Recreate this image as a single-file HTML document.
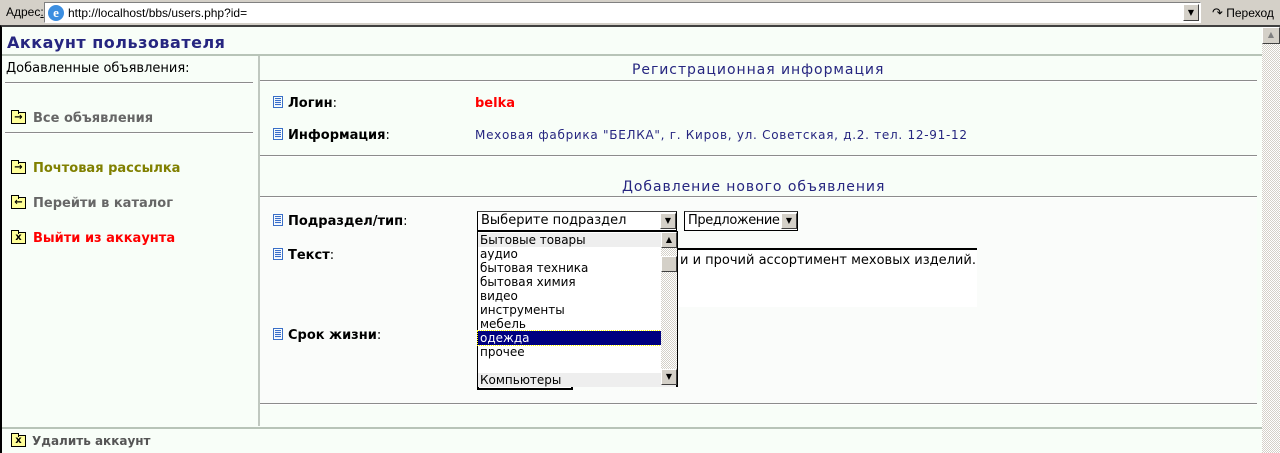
<!DOCTYPE html>
<html><head><meta charset="utf-8"><style>
*{margin:0;padding:0;box-sizing:border-box}
body{width:1280px;height:453px;overflow:hidden;background:#d4d0c8;position:relative;font-family:"DejaVu Sans","Liberation Sans",sans-serif;font-size:13px}
.a{position:absolute;white-space:nowrap}
.hr{position:absolute;height:2px;background:#8c8c8c;border-bottom:1px solid #fff}
.lh{position:absolute;height:1px;background:#b8c4b8}
.fold{position:absolute;width:15px;height:12px;background:#ffff99;border:1px solid #000;font:bold 10px/9px "DejaVu Sans",sans-serif;text-align:center;color:#000}
.fold:before{content:"";position:absolute;left:-1px;top:-3px;width:6px;height:3px;background:#ffff99;border:1px solid #000;border-bottom:none}
.doc{position:absolute;width:10px;height:12px;border:1px solid #3a6fc8;background:repeating-linear-gradient(#e8f0ff 0 1px,#3a6fc8 1px 2px);background-clip:content-box;padding:1px}
.b{font-weight:bold;color:#000}
.sel{position:absolute;background:#fff;border:1px solid #000;border-top-color:#404040;font-size:13px;padding-left:3px;line-height:18px}
.arr{position:absolute;width:16px;background:#d4d0c8;border:1px solid;border-color:#fff #404040 #404040 #fff;font-size:8px;text-align:center}
.w{letter-spacing:0.95px}
</style></head><body>
<div class="a" style="left:6px;top:5px;font:12px 'Liberation Sans',sans-serif;color:#000">Адрес<u>:</u></div>
<div class="a" style="left:44px;top:2px;width:1157px;height:21px;background:#fff;border:1px solid #808080;border-right-color:#fff;border-bottom-color:#fff"></div>
<div class="a" style="left:48px;top:5px;width:16px;height:16px;border-radius:50%;background:#3c8ee0;color:#fff;font:bold 13px/16px 'Liberation Serif';text-align:center">e</div>
<div class="a" style="left:68px;top:6px;font:12px 'Liberation Sans',sans-serif">http://localhost/bbs/users.php?id=</div>
<div class="arr" style="left:1183px;top:4px;height:17px;line-height:15px">▼</div>
<div class="a" style="left:1212px;top:5px;font:12px 'Liberation Sans',sans-serif"><span style="font-size:13px">↷</span> Переход</div>
<div class="a" style="left:0;top:25px;width:1280px;height:428px;background:#f8fef8;border-top:2px solid #404040;border-left:2px solid #000"></div>
<div class="a" style="left:1262px;top:27px;width:18px;height:426px;background:repeating-conic-gradient(#d4d0c8 0 25%,#fff 0 50%) 0 0/2px 2px"></div>
<div class="arr" style="left:1262px;top:27px;height:17px;line-height:14px;width:18px;color:#808080">▲</div>
<div class="a" style="left:7px;top:33px;font-size:16px;font-weight:bold;color:#262680;letter-spacing:0.5px">Аккаунт пользователя</div>
<div class="lh" style="left:2px;top:54px;width:1260px;height:2px"></div>
<div class="a" style="left:258px;top:56px;width:2px;height:370px;background:#c0c8c0"></div>
<div class="a" style="left:6px;top:61px;color:#000">Добавленные объявления:</div>
<div class="hr" style="left:5px;top:82px;width:248px"></div>
<div class="fold" style="left:11px;top:112px">→</div>
<div class="a" style="left:33px;top:111px;color:#666;font-weight:bold">Все объявления</div>
<div class="hr" style="left:5px;top:132px;width:248px"></div>
<div class="fold" style="left:11px;top:162px">→</div>
<div class="a" style="left:33px;top:161px;color:#808000;font-weight:bold">Почтовая рассылка</div>
<div class="fold" style="left:11px;top:197px">←</div>
<div class="a" style="left:33px;top:196px;color:#666;font-weight:bold">Перейти в каталог</div>
<div class="fold" style="left:11px;top:232px">x</div>
<div class="a" style="left:33px;top:231px;color:#f00;font-weight:bold">Выйти из аккаунта</div>
<div class="a w" style="left:632px;top:62px;font-size:14px;color:#262680">Регистрационная информация</div>
<div class="hr" style="left:260px;top:80px;width:997px"></div>
<div class="doc" style="left:273px;top:96px"></div>
<div class="a b" style="left:288px;top:96px">Логин<span style="font-weight:normal">:</span></div>
<div class="a" style="left:475px;top:96px;color:#f00;font-weight:bold">belka</div>
<div class="doc" style="left:273px;top:128px"></div>
<div class="a b" style="left:288px;top:128px">Информация<span style="font-weight:normal">:</span></div>
<div class="a" style="left:475px;top:128px;font-size:12px;color:#262680;letter-spacing:0.72px">Меховая фабрика "БЕЛКА", г. Киров, ул. Советская, д.2. тел. 12-91-12</div>
<div class="hr" style="left:260px;top:155px;width:997px"></div>
<div class="a w" style="left:622px;top:179px;font-size:14px;color:#262680">Добавление нового объявления</div>
<div class="hr" style="left:260px;top:196px;width:997px"></div>
<div class="a" style="left:260px;top:199px;width:997px;height:204px;background:#fafcfa"></div>
<div class="doc" style="left:273px;top:214px"></div>
<div class="a b" style="left:288px;top:214px">Подраздел/тип<span style="font-weight:normal">:</span></div>
<div class="doc" style="left:273px;top:248px"></div>
<div class="a b" style="left:288px;top:248px">Текст<span style="font-weight:normal">:</span></div>
<div class="doc" style="left:273px;top:328px"></div>
<div class="a b" style="left:288px;top:328px">Срок жизни<span style="font-weight:normal">:</span></div>
<div class="sel" style="left:477px;top:211px;width:200px;height:20px">Выберите подраздел</div>
<div class="arr" style="left:660px;top:213px;height:16px;line-height:14px">▼</div>
<div class="sel" style="left:684px;top:211px;width:114px;height:20px;letter-spacing:-0.4px;overflow:hidden">Предложение</div>
<div class="arr" style="left:781px;top:213px;height:16px;line-height:14px">▼</div>
<div class="a" style="left:677px;top:248px;width:300px;height:59px;background:#fff;border-top:2px solid #000;padding:3px 0 0 3px">и и прочий ассортимент меховых изделий.</div>
<div class="a" style="left:477px;top:380px;width:96px;height:10px;border:2px solid #000;border-top:none;background:#fff"></div>
<div class="a" style="left:477px;top:231px;width:201px;height:156px;background:#fff;border:1px solid #000;border-right-width:2px;border-bottom-width:2px;font-size:12px;line-height:14px;padding-top:1px">
<div style="background:#eee;padding-left:2px">Бытовые товары</div>
<div style="padding-left:2px">аудио</div><div style="padding-left:2px">бытовая техника</div><div style="padding-left:2px">бытовая химия</div><div style="padding-left:2px">видео</div><div style="padding-left:2px">инструменты</div><div style="padding-left:2px">мебель</div>
<div style="background:#000080;color:#fff;padding-left:2px;width:183px;outline:1px dotted #ff0">одежда</div>
<div style="padding-left:2px">прочее</div><div style="height:14px"></div>
<div style="background:#eee;padding-left:2px">Компьютеры</div>
</div>
<div class="a" style="left:661px;top:232px;width:16px;height:153px;background:repeating-conic-gradient(#d4d0c8 0 25%,#fff 0 50%) 0 0/2px 2px"></div>
<div class="arr" style="left:661px;top:232px;height:16px;line-height:14px">▲</div>
<div class="arr" style="left:661px;top:256px;height:16px"></div>
<div class="arr" style="left:661px;top:369px;height:16px;line-height:14px">▼</div>
<div class="hr" style="left:260px;top:403px;width:997px"></div>
<div class="lh" style="left:2px;top:427px;width:1260px;height:2px"></div>
<div class="fold" style="left:11px;top:435px">x</div>
<div class="a" style="left:32px;top:434px;color:#555;font-weight:bold;font-size:12px">Удалить аккаунт</div>
</body></html>
